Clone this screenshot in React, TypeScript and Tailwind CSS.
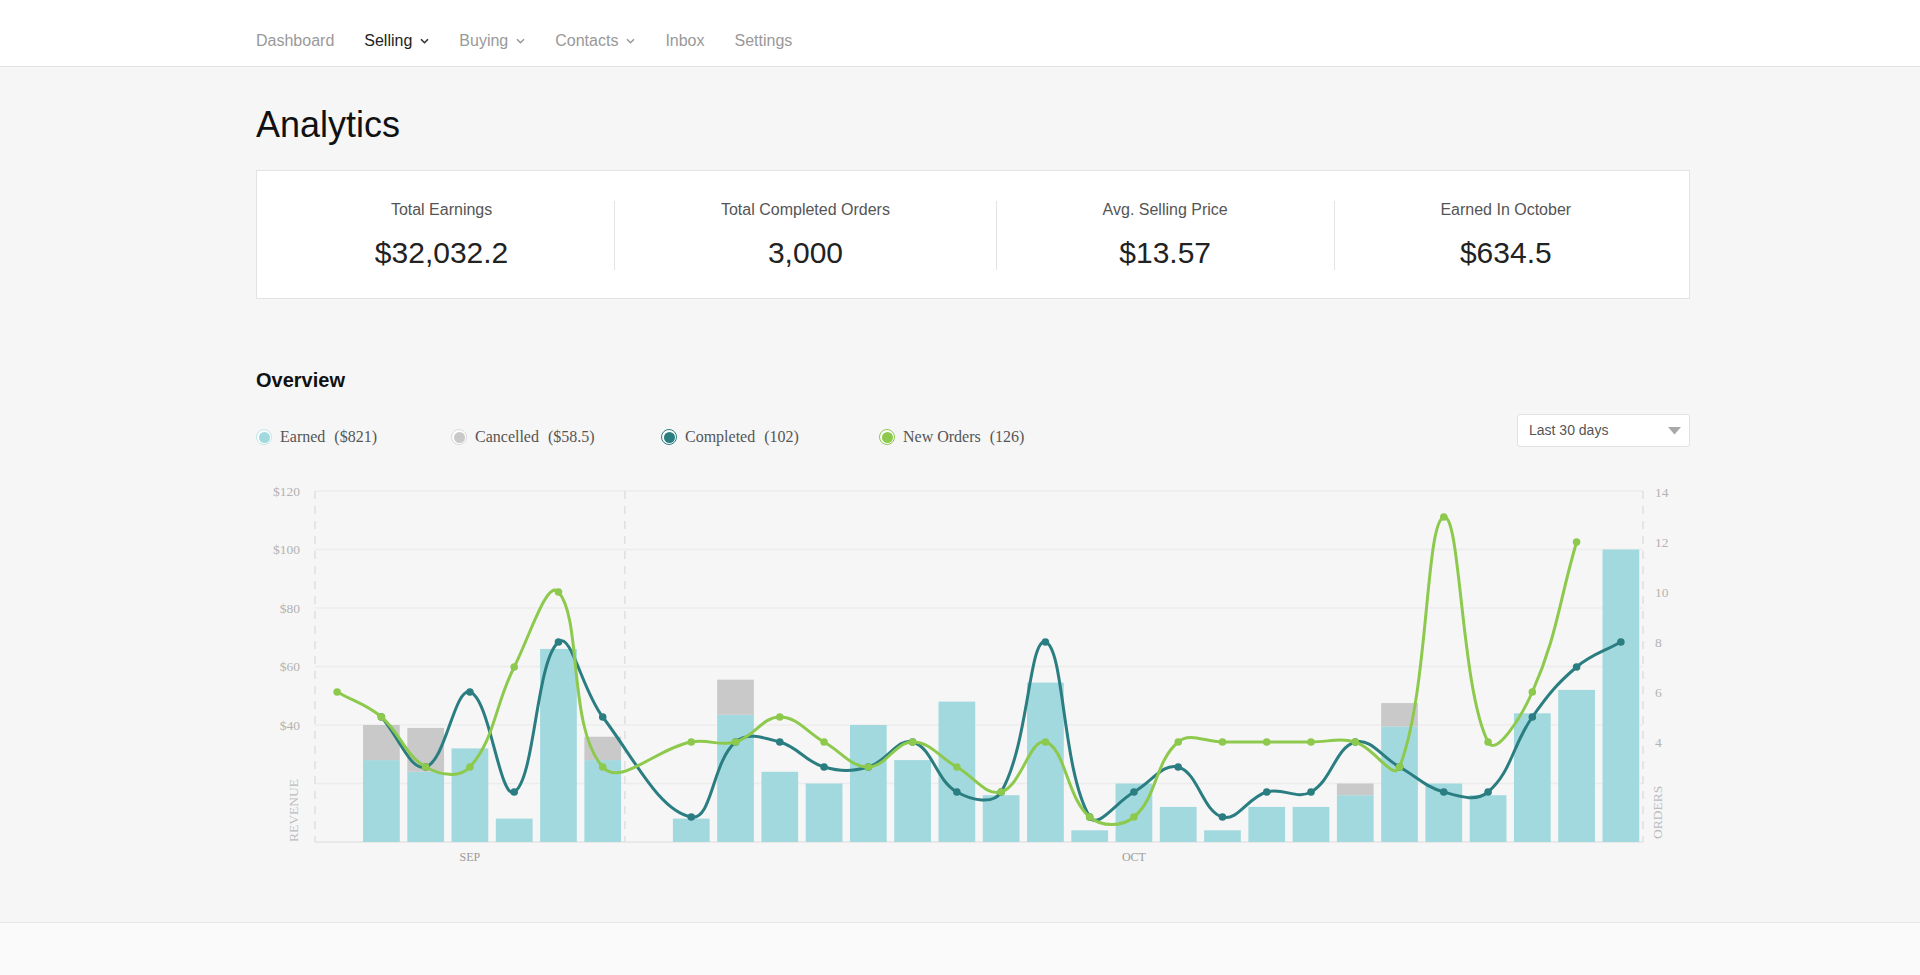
import React from 'react'

const SLOT = 1328 / 30
const PL = 59
const PR = 1387
const PT = 16
const PB = 367
const REV = (PB - PT) / 120
const ORD = 25

const earned = [0, 28, 24, 32, 8, 66, 28, 0, 8, 43.5, 24, 20, 40, 28, 48, 16, 54.5, 4, 20, 12, 4, 12, 12, 16, 39.5, 20, 16, 44, 52, 100]
const cancelled = [0, 12, 15, 0, 0, 0, 8, 0, 0, 12, 0, 0, 0, 0, 0, 0, 0, 0, 0, 0, 0, 0, 0, 4, 8, 0, 0, 0, 0, 0]
const completed = [null, 5, 3, 6, 2, 8, 5, null, 1, 4, 4, 3, 3, 4, 2, 2, 8, 1, 2, 3, 1, 2, 2, 4, 3, 2, 2, 5, 7, 8]
const newOrders = [6, 5, 3, 3, 7, 10, 3, null, 4, 4, 5, 4, 3, 4, 3, 2, 4, 1, 1, 4, 4, 4, 4, 4, 3, 13, 4, 6, 12, null]

type Pt = { x: number; y: number }

const cx = (i: number) => PL + SLOT * (i + 0.5)

function toPoints(data: (number | null)[]): Pt[] {
    const pts: Pt[] = []
    data.forEach((v, i) => {
        if (v !== null) pts.push({ x: cx(i), y: PB - v * ORD })
    })
    return pts
}

// same smoothing as a tension 0.4 line chart
function spline(pts: Pt[], t = 0.4) {
    const cps = pts.map((cur, i) => {
        const prev = pts[i - 1] ?? cur
        const next = pts[i + 1] ?? cur
        const d01 = Math.hypot(cur.x - prev.x, cur.y - prev.y)
        const d12 = Math.hypot(next.x - cur.x, next.y - cur.y)
        const sum = d01 + d12
        const fa = sum ? (t * d01) / sum : 0
        const fb = sum ? (t * d12) / sum : 0
        return {
            in: { x: cur.x - fa * (next.x - prev.x), y: cur.y - fa * (next.y - prev.y) },
            out: { x: cur.x + fb * (next.x - prev.x), y: cur.y + fb * (next.y - prev.y) },
        }
    })
    let d = `M${pts[0].x},${pts[0].y}`
    for (let i = 1; i < pts.length; i++) {
        const a = cps[i - 1].out
        const b = cps[i].in
        d += ` C${a.x},${a.y} ${b.x},${b.y} ${pts[i].x},${pts[i].y}`
    }
    return d
}

function Chevron({ dark }: { dark?: boolean }) {
    return (
        <svg width="9" height="6" viewBox="0 0 9 6" className={dark ? 'ml-[8px] text-[#333]' : 'ml-[8px] text-[#9a9a9a]'}>
            <path d="M1 1.2l3.5 3.5 3.5-3.5" fill="none" stroke="currentColor" strokeWidth="1.6" />
        </svg>
    )
}

function Nav() {
    const items = [
        { label: 'Dashboard' },
        { label: 'Selling', menu: true, active: true },
        { label: 'Buying', menu: true },
        { label: 'Contacts', menu: true },
        { label: 'Inbox' },
        { label: 'Settings' },
    ]
    return (
        <nav className="h-[67px] bg-white border-b border-[#e3e3e3]">
            <div className="flex items-center h-full pt-[15px] pl-[256px] gap-[30px]">
                {items.map((it) => (
                    <a key={it.label} className={`flex items-center text-[16px] cursor-pointer ${it.active ? 'text-[#222]' : 'text-[#999]'}`}>
                        {it.label}
                        {it.menu && <Chevron dark={it.active} />}
                    </a>
                ))}
            </div>
        </nav>
    )
}

function Stats() {
    const stats = [
        ['Total Earnings', '$32,032.2'],
        ['Total Completed Orders', '3,000'],
        ['Avg. Selling Price', '$13.57'],
        ['Earned In October', '$634.5'],
    ]
    return (
        <div className="mt-[25px] flex bg-white border border-[#e3e3e3] px-3 pt-[30px] pb-[28px]">
            {stats.map(([label, value], i) => (
                <div key={label} className={`flex-auto flex flex-col items-center h-[69px] ${i > 0 ? 'border-l border-[#e3e3e3]' : ''}`}>
                    <div className="text-[16px] leading-[18px] text-[#555]">{label}</div>
                    <div className="mt-[18px] text-[30px] leading-[32px] text-[#222]">{value}</div>
                </div>
            ))}
        </div>
    )
}

function Legend() {
    const items = [
        { name: 'Earned', value: '($821)', ring: 'border-[#bfe5e8]', fill: 'bg-[#a2d9de]', w: 'w-[195px]' },
        { name: 'Cancelled', value: '($58.5)', ring: 'border-[#dadada]', fill: 'bg-[#c9c9c9]', w: 'w-[210px]' },
        { name: 'Completed', value: '(102)', ring: 'border-[#2a7d80]', fill: 'bg-[#2a7d80]', w: 'w-[218px]' },
        { name: 'New Orders', value: '(126)', ring: 'border-[#8dc94c]', fill: 'bg-[#8dc94c]', w: 'w-auto' },
    ]
    return (
        <div className="flex items-center mt-[13px] font-['Liberation_Serif',serif] text-[16px] leading-[20px] text-[#555]">
            {items.map((it) => (
                <div key={it.name} className={`flex items-center ${it.w}`}>
                    <span className={`w-4 h-4 rounded-full border-[1.5px] ${it.ring} bg-white p-[1.5px]`}>
                        <span className={`block w-full h-full rounded-full ${it.fill}`} />
                    </span>
                    <span className="ml-2">{it.name}</span>
                    <span className="ml-[9px]">{it.value}</span>
                </div>
            ))}
        </div>
    )
}

function RangeSelect() {
    return (
        <div className="w-[173px] h-[33px] flex items-center justify-between bg-white border border-[#e2e2e2] rounded-[3px] pl-[11px] pr-[8px] cursor-pointer">
            <span className="text-[14px] text-[#555]">Last 30 days</span>
            <svg width="13" height="8" viewBox="0 0 13 8">
                <path d="M0 0h13L6.5 7.5z" fill="#a8a8a8" />
            </svg>
        </div>
    )
}

function Chart() {
    const bw = SLOT * 0.83
    const greenPts = toPoints(newOrders)
    const tealPts = toPoints(completed)
    const split = PL + SLOT * 7
    return (
        <svg width="1434" height="400" className="mt-[28px] block font-['Liberation_Serif',serif]">
            {[0, 20, 40, 60, 80, 100, 120].map((v) => (
                <line key={v} x1={PL} x2={PR} y1={PB - v * REV} y2={PB - v * REV} stroke={v === 0 ? '#e4e4e4' : '#ececec'} strokeWidth="1.5" />
            ))}
            {[PL, split, PR].map((x) => (
                <line key={x} x1={x} x2={x} y1={PT} y2={PB} stroke="#dcdcdc" strokeWidth="1.3" strokeDasharray="8 7" />
            ))}
            {[40, 60, 80, 100, 120].map((v) => (
                <text key={v} x={44} y={PB - v * REV + 4.5} textAnchor="end" fontSize="13.5" fill="#b3b3b3">
                    ${v}
                </text>
            ))}
            {[4, 6, 8, 10, 12, 14].map((n) => (
                <text key={n} x={PR + 12} y={PB - n * ORD + 4.5} fontSize="13.5" fill="#b3b3b3">
                    {n}
                </text>
            ))}
            <text transform={`translate(42 ${PB}) rotate(-90)`} fontSize="13.5" fill="#bdbdbd">REVENUE</text>
            <text transform={`translate(${PR + 19} ${PB - 3}) rotate(-90)`} fontSize="13.5" fill="#bdbdbd">ORDERS</text>
            <text x={(PL + split) / 2} y={PB + 19} textAnchor="middle" fontSize="12" fill="#9c9c9c">SEP</text>
            <text x={(split + PR) / 2} y={PB + 19} textAnchor="middle" fontSize="12" fill="#9c9c9c">OCT</text>

            {earned.map((v, i) => {
                const x = cx(i) - bw / 2
                const c = cancelled[i]
                return (
                    <g key={i}>
                        {v > 0 && <rect x={x} y={PB - v * REV} width={bw} height={v * REV} fill="#a2d9de" />}
                        {c > 0 && <rect x={x} y={PB - (v + c) * REV} width={bw} height={c * REV} fill="#c9c9c9" />}
                    </g>
                )
            })}

            <path d={spline(tealPts)} fill="none" stroke="#2a7d80" strokeWidth="3" />
            {tealPts.map((p, i) => (
                <circle key={i} cx={p.x} cy={p.y} r="3.8" fill="#2a7d80" />
            ))}
            <path d={spline(greenPts)} fill="none" stroke="#8dc94c" strokeWidth="3" />
            {greenPts.map((p, i) => (
                <circle key={i} cx={p.x} cy={p.y} r="3.8" fill="#8dc94c" />
            ))}
        </svg>
    )
}

export default function App() {
    return (
        <div className="min-h-screen flex flex-col bg-[#f6f6f6] font-['Liberation_Sans',Arial,sans-serif]">
            <Nav />
            <main className="ml-[256px] w-[1434px] mb-[47px]">
                <h1 className="mt-[38px] text-[36px] leading-[40px] text-[#111]">Analytics</h1>
                <Stats />
                <h2 className="mt-[69px] text-[20px] leading-[24px] font-bold text-[#111]">Overview</h2>
                <div className="mt-[22px] flex items-start justify-between">
                    <Legend />
                    <RangeSelect />
                </div>
                <Chart />
            </main>
            <footer className="flex-1 min-h-[52px] bg-[#fafafa] border-t border-[#e8e8e8]" />
        </div>
    )
}
